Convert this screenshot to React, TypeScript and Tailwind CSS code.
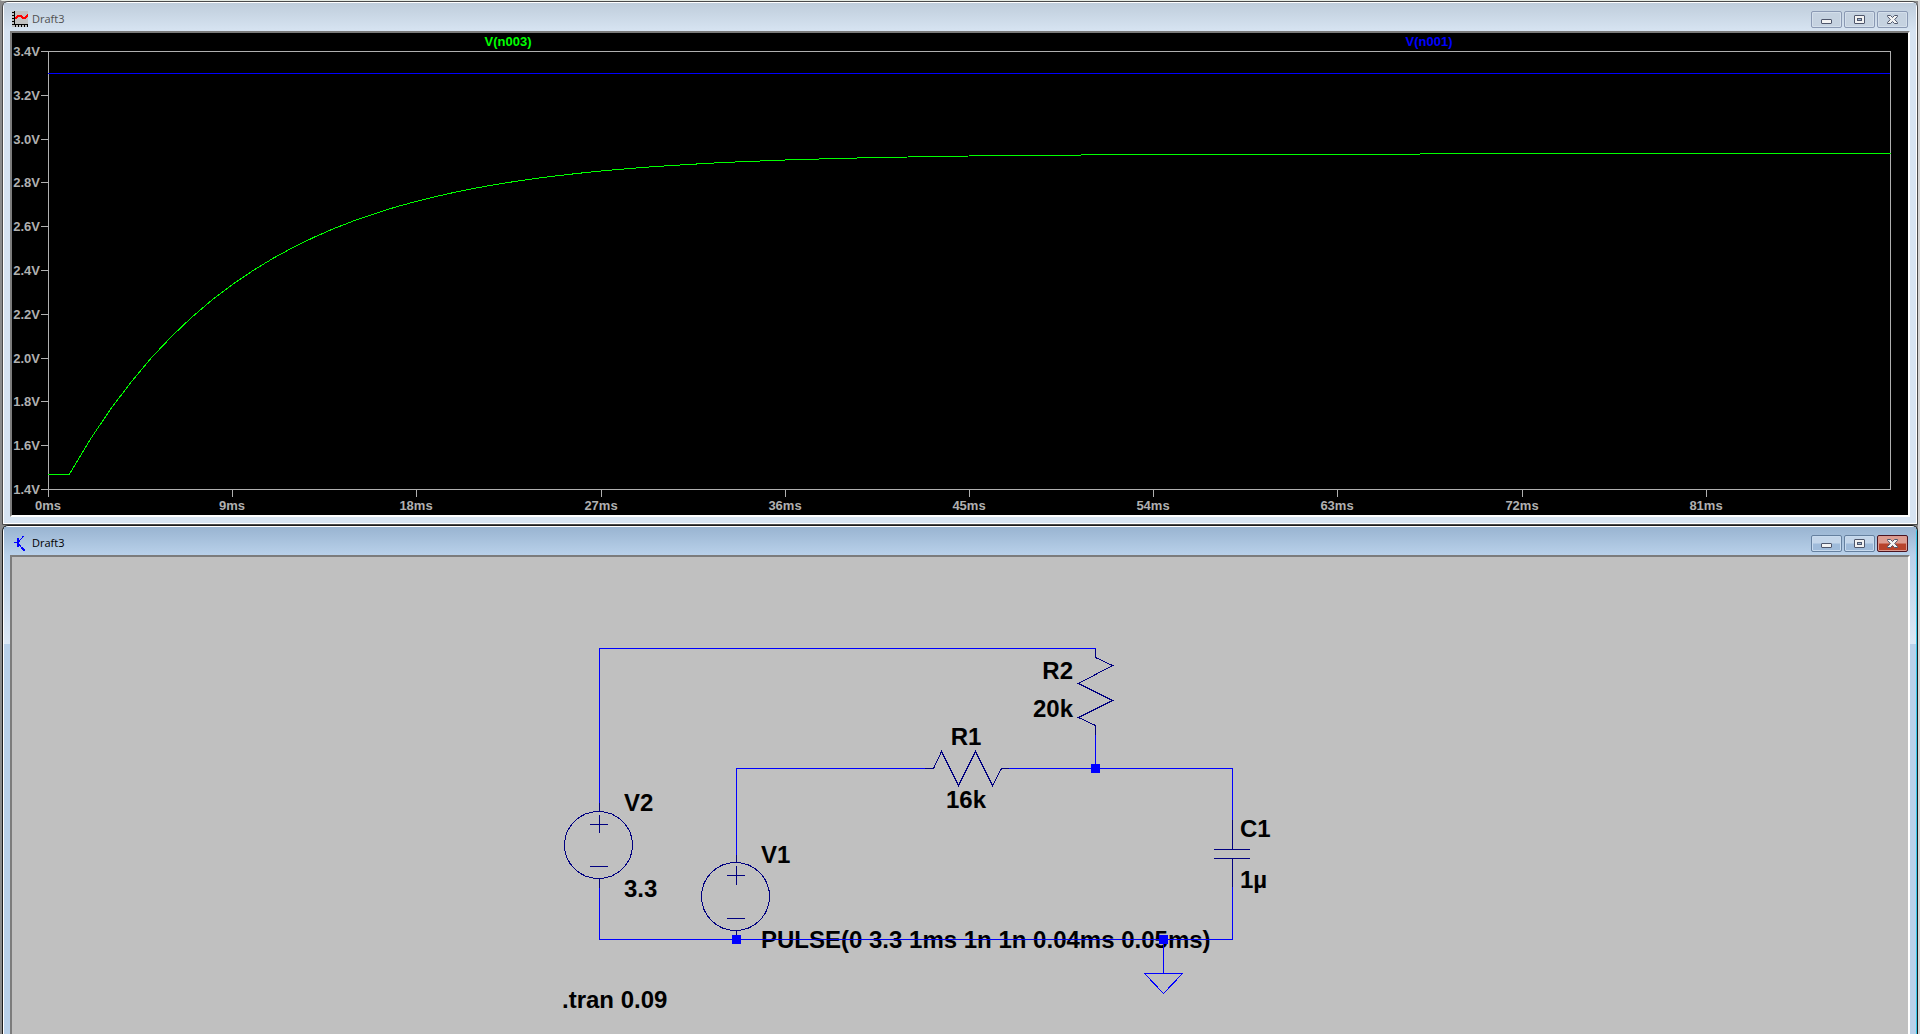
import type { ReactNode } from "react";

type WindowProps = {
  title: string;
  icon: ReactNode;
  active?: boolean;
  children: ReactNode;
};

const V_MIN = 1.4;
const LEFT = 36;
const RIGHT = 1878;
const TOP = 18;
const BOTTOM = 456;

const volts = ["3.4V", "3.2V", "3.0V", "2.8V", "2.6V", "2.4V", "2.2V", "2.0V", "1.8V", "1.6V", "1.4V"];
const times = ["0ms", "9ms", "18ms", "27ms", "36ms", "45ms", "54ms", "63ms", "72ms", "81ms"];

const xAt = (ms: number) => LEFT + (ms / 90) * (RIGHT - LEFT) + 0.5;
const yAt = (v: number) => BOTTOM - ((v - V_MIN) / 2) * (BOTTOM - TOP) + 0.5;

// RC charge through R1 || R2 = 8.89k into 1uF, starting at 1ms
function chargeCurve() {
  const points = [`${xAt(0)},${yAt(1.467)}`];
  for (let ms = 1; ms <= 90; ms++) {
    const v = 2.933 - 1.466 * Math.exp(-(ms - 1) / 8.889);
    points.push(`${xAt(ms).toFixed(1)},${yAt(v).toFixed(1)}`);
  }
  return points.join(" ");
}

function PlotIcon() {
  return (
    <svg className="size-4" viewBox="0 0 16 16" shapeRendering="crispEdges" aria-hidden="true">
      <rect width="16" height="16" fill="#c0c0c0" />
      <path d="M2.5 0V14M2 13.5H16M0 1.5H2M0 4.5H2M0 7.5H2M0 10.5H2M0 13.5H2M3.5 14V16M6.5 14V16M9.5 14V16M12.5 14V16M15.5 14V16" stroke="#000" />
      <path d="M3 8L6 5H9L11 7H13L16 4" fill="none" stroke="#f00" strokeWidth="2" />
    </svg>
  );
}

function SchematicIcon() {
  return (
    <svg className="size-4" viewBox="0 0 16 16" shapeRendering="crispEdges" aria-hidden="true">
      <path d="M2 7.5H6M7 6.5L11.5 1M7 9.5L12 15" fill="none" stroke="#00f" />
      <path d="M5 3H7V12H5ZM9 13L11 11V13L13 15V16H11Z" fill="#00f" />
    </svg>
  );
}

function CaptionButtons({ active }: { active?: boolean }) {
  const plain = active
    ? "flex h-[17px] w-[31px] items-center justify-center rounded-xs border border-[#65809f] bg-linear-to-b from-[#c4d6ea] from-45% to-[#9fbbda] to-55% shadow-[inset_0_0_0_1px_#c8dbef]"
    : "flex h-[17px] w-[31px] items-center justify-center rounded-xs border border-[#8a99b3] bg-[#c5d2e0] shadow-[inset_0_0_0_1px_#d4dfeb]";
  const close = active
    ? "flex h-[17px] w-[31px] items-center justify-center rounded-xs border border-[#4b1420] bg-linear-to-b from-[#dd9c90] from-45% to-[#b8432b] to-55% shadow-[inset_0_0_0_1px_#dc9a90]"
    : plain;

  return (
    <div className="flex gap-0.5">
      <button type="button" aria-label="Minimize" className={plain}>
        <svg className="h-[11px] w-[11px]" viewBox="0 0 11 11">
          <rect x="0.5" y="5.5" width="10" height="4" rx="0.5" fill="#f3f3f3" stroke="#4e566b" />
        </svg>
      </button>
      <button type="button" aria-label="Maximize" className={plain}>
        <svg className="h-[11px] w-[11px]" viewBox="0 0 11 11">
          <rect x="0.5" y="1.5" width="10" height="8" rx="0.5" fill="#f3f3f3" stroke="#4e566b" />
          <rect x="3.5" y="4.5" width="4" height="2" fill="#9fb7d4" stroke="#4e566b" />
        </svg>
      </button>
      <button type="button" aria-label="Close" className={close}>
        <svg className="h-[11px] w-[11px]" viewBox="0 0 11 11">
          <path d="M0.5 1.5H3.5L5.5 3.5L7.5 1.5H10.5V2.5L7.7 5.5L10.5 8.5V9.5H7.5L5.5 7.5L3.5 9.5H0.5V8.5L3.3 5.5L0.5 2.5Z" fill="#f3f3f3" stroke="#4e566b" />
        </svg>
      </button>
    </div>
  );
}

function DraftWindow({ title, icon, active, children }: WindowProps) {
  return (
    <section
      className={
        active
          ? "flex grow flex-col rounded-t-md border border-b-0 border-[#1c1c1c] bg-[#b9d1ea]"
          : "flex flex-col rounded-t-md border border-[#4a4a4a] bg-[#d7e4f2]"
      }
    >
      <div
        className={
          active
            ? "flex grow flex-col rounded-t-md border border-b-0 border-white border-r-[#35c8e8]"
            : "flex flex-col rounded-t-md border border-white"
        }
      >
        <header
          className={
            active
              ? "flex h-7 items-center justify-between bg-linear-to-b from-[#99b4d1] to-[#b9d1ea] px-2 pt-1"
              : "flex h-7 items-center justify-between bg-linear-to-b from-[#bfcddb] to-[#d7e4f2] px-2 pt-1"
          }
        >
          <div className="flex items-center gap-1 font-['Open_Sans','Noto_Sans',sans-serif] text-[11px] leading-4">
            {icon}
            <h2 className={active ? "text-black" : "text-[#505050]"}>{title}</h2>
          </div>
          <CaptionButtons active={active} />
        </header>
        <div className={active ? "flex grow bg-linear-to-b from-[#b9d1ea] to-[#dce8f5] bg-[length:100%_89px] bg-no-repeat px-1.5" : "flex px-1.5 pb-1.5"}>
          <div
            className={
              active
                ? "grow border-2 border-b-0 border-t-[#7c7c7c] border-r-white border-l-[#7c7c7c] bg-[#c0c0c0]"
                : "grow border-2 border-t-[#7c7c7c] border-r-white border-b-white border-l-[#7c7c7c] bg-black"
            }
          >
            {children}
          </div>
        </div>
      </div>
    </section>
  );
}

function WaveformPlot() {
  return (
    <svg className="block w-full text-[13px] font-bold" viewBox="0 0 1896 482" role="img" aria-label="Transient waveforms">
      <g fill="none" stroke="#b0b0b0" shapeRendering="crispEdges">
        <rect x={LEFT + 0.5} y={TOP + 0.5} width={RIGHT - LEFT} height={BOTTOM - TOP} />
        {volts.map((label, i) => (
          <path key={label} d={`M29 ${Math.round(TOP + i * 43.8) + 0.5}H36`} />
        ))}
        {times.map((label, i) => (
          <path key={label} d={`M${Math.round(LEFT + i * 184.2) + 0.5} 457V464`} />
        ))}
      </g>
      <g fill="#b0b0b0">
        {volts.map((label, i) => (
          <text key={label} x="28" y={Math.round(TOP + i * 43.8) + 5} textAnchor="end">
            {label}
          </text>
        ))}
        {times.map((label, i) => (
          <text key={label} x={Math.round(LEFT + i * 184.2)} y="477" textAnchor="middle">
            {label}
          </text>
        ))}
      </g>
      <text x="496" y="13" textAnchor="middle" fill="#00ff00">V(n003)</text>
      <text x="1417" y="13" textAnchor="middle" fill="#0000ff">V(n001)</text>
      <path d="M36 40.5H1878" stroke="#0000ff" shapeRendering="crispEdges" />
      <polyline points={chargeCurve()} fill="none" stroke="#00ff00" shapeRendering="crispEdges" />
    </svg>
  );
}

function Schematic() {
  return (
    <svg className="block w-full text-2xl font-bold" viewBox="0 0 1896 477" role="img" aria-label="RC circuit schematic">
      <g fill="#000">
        <text x="612" y="254">V2</text>
        <text x="612" y="340">3.3</text>
        <text x="749" y="306">V1</text>
        <text x="749" y="391">PULSE(0 3.3 1ms 1n 1n 0.04ms 0.05ms)</text>
        <text x="954" y="188" textAnchor="middle">R1</text>
        <text x="954" y="251" textAnchor="middle">16k</text>
        <text x="1061" y="122" textAnchor="end">R2</text>
        <text x="1061" y="160" textAnchor="end">20k</text>
        <text x="1228" y="280">C1</text>
        <text x="1228" y="331">1µ</text>
        <text x="550" y="451">.tran 0.09</text>
      </g>
      {/* wires */}
      <g fill="none" stroke="#0000ff" shapeRendering="crispEdges">
        <path d="M587.5 246V91.5H1083.5V100" />
        <path d="M587.5 331V382.5H1220.5V330" />
        <path d="M724.5 298V211.5H913" />
        <path d="M997 211.5H1220.5V263" />
        <path d="M1083.5 178V211" />
        <path d="M1151.5 382V416.5M1132.5 416.5H1170.5L1151.5 436.5Z" />
      </g>
      {/* components */}
      <g fill="none" stroke="#000080" shapeRendering="crispEdges">
        <path d="M587.5 246V255M587.5 321V331M578 267.5H596M587.5 258V276M578 309.5H596" />
        <ellipse cx="586.5" cy="288" rx="34" ry="33.5" />
        <path d="M724.5 298V306M724.5 373V378M715 318.5H733M724.5 309V328M715 361.5H733" />
        <circle cx="723.5" cy="339.5" r="34" />
        <path d="M913 211.5H921.5L929.5 194.5L946.5 228.5L963.5 194.5L980.5 228.5L989.5 211.5H997" />
        <path d="M1083.5 92V100.5L1100.5 108.5L1066.5 126.5L1100.5 143.5L1066.5 160.5L1083.5 168.5V178" />
        <path d="M1220.5 263V292M1202 292.5H1238M1202 301.5H1238M1220.5 302V330" />
      </g>
      {/* junctions */}
      <g fill="#0000ff">
        <rect x="720" y="378" width="9" height="9" />
        <rect x="1079" y="207" width="9" height="9" />
        <rect x="1147" y="378" width="9" height="9" />
      </g>
    </svg>
  );
}

export default function App() {
  return (
    <main className="flex h-screen flex-col overflow-hidden border-x-2 border-t border-t-[#e4e9e2] border-r-[#d6d6d6] border-l-[#8a8a8a] bg-[#8a8a8a] font-['Liberation_Sans',Arial,sans-serif]">
      <DraftWindow title="Draft3" icon={<PlotIcon />}>
        <WaveformPlot />
      </DraftWindow>
      <DraftWindow title="Draft3" icon={<SchematicIcon />} active>
        <Schematic />
      </DraftWindow>
    </main>
  );
}
